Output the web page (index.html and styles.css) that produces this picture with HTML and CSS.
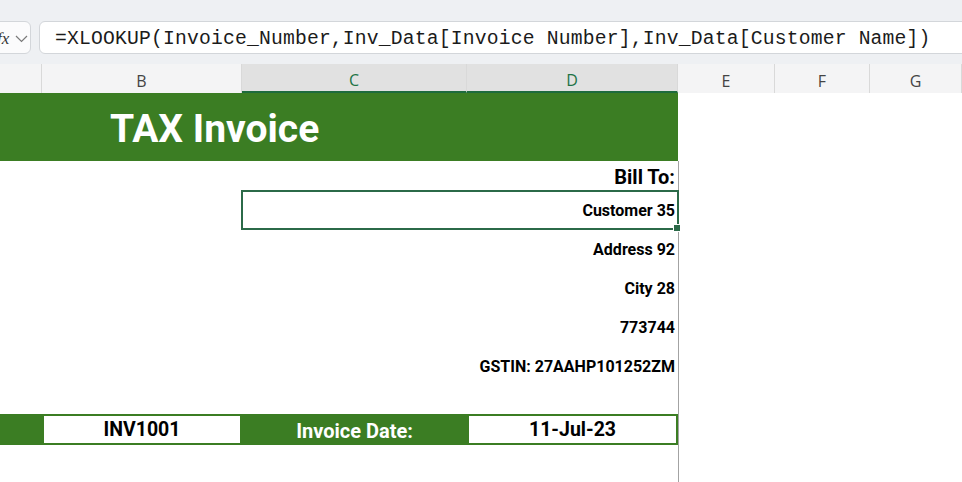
FILE: index.html
```html
<!DOCTYPE html>
<html lang="en">
<head>
<meta charset="utf-8">
<title>TAX Invoice</title>
<link rel="stylesheet" href="styles.css">
</head>
<body>
<div class="app">
  <div class="formula-bar">
    <div class="namebox">
      <span class="fx">fx</span>
      <svg class="chev" width="13" height="8" viewBox="0 0 13 8"><polyline points="1,1 6.5,6.5 12,1" fill="none" stroke="#7a7a7a" stroke-width="1.2"/></svg>
    </div>
    <div class="formula">=XLOOKUP(Invoice_Number,Inv_Data[Invoice Number],Inv_Data[Customer Name])</div>
  </div>
  <div class="headers">
    <div class="hdr"></div>
    <div class="hdr">B</div>
    <div class="hdr sel">C</div>
    <div class="hdr sel">D</div>
    <div class="hdr">E</div>
    <div class="hdr">F</div>
    <div class="hdr">G</div>
  </div>
  <div class="sheet">
    <div class="title">TAX Invoice</div>
    <div class="page-line"></div>
    <div class="cell bill">Bill To:</div>
    <div class="cell customer">Customer 35<span class="handle"></span></div>
    <div class="cell info r4">Address 92</div>
    <div class="cell info r5">City 28</div>
    <div class="cell info r6">773744</div>
    <div class="cell info r7">GSTIN: 27AAHP101252ZM</div>
    <div class="inv-row">
      <div class="inv-cell green"></div>
      <div class="inv-cell white">INV1001</div>
      <div class="inv-cell green label">Invoice Date:</div>
      <div class="inv-cell white">11-Jul-23</div>
    </div>
  </div>
</div>
</body>
</html>
```
FILE: styles.css
```css
html, body {
  margin: 0;
  padding: 0;
  background: #ffffff;
}

.app {
  width: 962px;
  height: 482px;
  overflow: hidden;
  background: #ffffff;
  font-family: Roboto, "Liberation Sans", sans-serif;
}

.formula-bar {
  height: 64px;
  box-sizing: border-box;
  padding-top: 21px;
  background: #eef0f3;
  display: flex;
  align-items: flex-start;
  gap: 8px;
}

.namebox {
  width: 41px;
  height: 33px;
  margin-left: -10px;
  box-sizing: border-box;
  background: #fbfbfc;
  border: 1px solid #d3d6da;
  border-radius: 6px;
  display: flex;
  align-items: center;
  padding-left: 6px;
  gap: 6px;
  flex: none;
}

.fx {
  font-family: "Liberation Serif", serif;
  font-style: italic;
  font-size: 17px;
  color: #333;
  line-height: 1;
  margin-top: 2px;
}

.chev {
  display: block;
  margin-top: 2px;
}

.formula {
  flex: none;
  width: 960px;
  height: 33px;
  box-sizing: border-box;
  background: #ffffff;
  border: 1px solid #d3d6da;
  border-radius: 6px;
  padding-left: 15px;
  padding-top: 2px;
  font-family: "Liberation Mono", monospace;
  font-size: 19.7px;
  letter-spacing: 0.18px;
  line-height: 31px;
  color: #1b1b1b;
  white-space: nowrap;
  overflow: hidden;
}

.headers {
  display: grid;
  grid-template-columns: 42px 200px 225px 211px 97px 95px 92px;
  height: 29px;
  background: #f4f4f5;
}

.hdr {
  box-sizing: border-box;
  border-right: 1px solid #d9d9d9;
  font-family: "Open Sans", "Noto Sans", sans-serif;
  font-size: 16px;
  color: #444;
  text-align: center;
  line-height: 29px;
  padding-top: 3px;
  height: 29px;
}

.hdr.sel {
  background: #e1e1e1;
  color: #217346;
  border-bottom: 2px solid #1e6b3d;
  line-height: 26px;
}

.sheet {
  display: grid;
  grid-template-columns: 42px 200px 225px 211px 97px 95px 92px;
  grid-template-rows: 68px 29px 40px 39px 39px 39px 39px 28px 31px 1fr;
  height: 389px;
}

.title {
  grid-column: 1 / 5;
  grid-row: 1;
  background: #3b7d23;
  color: #ffffff;
  font-weight: 700;
  font-size: 39px;
  display: flex;
  align-items: center;
  padding-left: 110px;
  padding-top: 3px;
  box-sizing: border-box;
}

.page-line {
  grid-column: 5 / 8;
  grid-row: 2 / -1;
  border-left: 1px solid #a3a3a3;
}

.cell {
  display: flex;
  align-items: center;
  justify-content: flex-end;
  padding-right: 3px;
  font-weight: 700;
  color: #000;
  font-size: 16px;
  white-space: nowrap;
}

.bill {
  grid-column: 4;
  grid-row: 2;
  font-size: 20px;
  padding-top: 2px;
}

.customer {
  grid-column: 3 / 5;
  grid-row: 3;
  border: 2px solid #2b6a48;
  margin-left: -1px;
  margin-right: -1px;
  padding-right: 2px;
  position: relative;
}

.handle {
  position: absolute;
  right: -4px;
  bottom: -4px;
  width: 6px;
  height: 6px;
  background: #2b6a48;
  border: 1px solid #ffffff;
}

.info { grid-column: 4; }
.r4 { grid-row: 4; }
.r5 { grid-row: 5; }
.r6 { grid-row: 6; }
.r7 { grid-row: 7; }

.inv-row {
  grid-column: 1 / 5;
  grid-row: 9;
  display: grid;
  grid-template-columns: 42px 200px 225px 211px;
  background: #3b7d23;
}

.inv-cell {
  display: flex;
  align-items: center;
  justify-content: center;
  font-weight: 700;
  font-size: 19.5px;
  padding-top: 2px;
  box-sizing: border-box;
}

.inv-cell.white {
  background: #ffffff;
  border: 2px solid #3b7d23;
  color: #000;
  padding-top: 0;
}

.inv-cell.label {
  color: #ffffff;
  font-size: 20px;
}
```
